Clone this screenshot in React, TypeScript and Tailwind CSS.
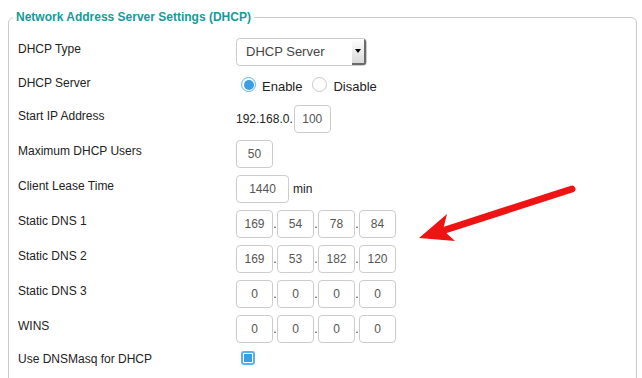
import React from "react";

const Box = ({ v, w = "w-[37px]" }: { v: string; w?: string }) => (
  <div className={`${w} h-[28px] border border-[#cccccc] rounded-[4px] text-center leading-[26px] text-[12px] text-[#555555]`}>{v}</div>
);

const Dot = () => <span className="w-[4px] text-center text-[12px] text-[#333]">.</span>;

const Ip = ({ parts }: { parts: string[] }) => (
  <div className="flex items-baseline">
    <Box v={parts[0]} />
    <Dot />
    <Box v={parts[1]} />
    <Dot />
    <Box v={parts[2]} />
    <Dot />
    <Box v={parts[3]} />
  </div>
);

const Row = ({ label, h, children, lp = "pb-[5px]" }: { label: string; h: string; children: React.ReactNode; lp?: string }) => (
  <div className={`flex items-center ${h}`}>
    <div className={`w-[218px] text-[12px] text-[#222] ${lp}`}>{label}</div>
    <div className="flex items-center">{children}</div>
  </div>
);

export default function App() {
  return (
    <div className="relative w-[642px] h-[378px] overflow-hidden bg-white" style={{ fontFamily: '"Liberation Sans", Arial, sans-serif' }}>
      <fieldset className="ml-[8px] mr-[5px] mt-[10px] border border-[#cccccc] rounded-[6px] pl-[9px] pr-2 pb-4 h-[420px]">
        <legend className="-ml-[5px] px-[3px] text-[12px] font-bold text-[#159a9a] leading-[15px]">Network Address Server Settings (DHCP)</legend>
        <div className="pt-[10px]">
          <Row label="DHCP Type" h="h-[33px]">
            <div className="flex w-[131px] h-[28px] border border-[#cccccc] rounded-[4px] overflow-hidden">
              <div className="flex-1 pl-[9px] text-[13px] leading-[26px] text-[#444]">DHCP Server</div>
              <div className="w-[14px] flex items-center justify-center bg-gradient-to-b from-[#ffffff] to-[#d9d9d9] border-r-2 border-b-2 border-[#6a6a6a]">
                <div className="w-0 h-0 border-l-[3px] border-r-[3px] border-t-[4px] border-l-transparent border-r-transparent border-t-black" />
              </div>
            </div>
          </Row>
          <Row label="DHCP Server" h="h-[33px]" lp="pb-[3px]">
            <div className="flex items-center pl-[5px]">
              <div className="w-[15px] h-[15px] rounded-full border border-[#5ab2ea] bg-white flex items-center justify-center">
                <div className="w-[10px] h-[10px] rounded-full bg-[#3b9fe5]" />
              </div>
              <span className="ml-[6px] mt-[5px] text-[13px] text-[#222]">Enable</span>
              <div className="ml-[10px] w-[15px] h-[15px] rounded-full border border-[#c8c8c8] bg-white" />
              <span className="ml-[6px] mt-[5px] text-[13px] text-[#222]">Disable</span>
            </div>
          </Row>
          <Row label="Start IP Address" h="h-[35px]">
            <div className="flex items-baseline">
              <span className="text-[12px] text-[#222]">192.168.0.</span>
              <div className="ml-[1px]"><Box v="100" /></div>
            </div>
          </Row>
          <Row label="Maximum DHCP Users" h="h-[35px]">
            <Box v="50" />
          </Row>
          <Row label="Client Lease Time" h="h-[35px]">
            <div className="flex items-baseline">
              <Box v="1440" w="w-[53px]" />
              <span className="ml-[4px] text-[12px] text-[#222]">min</span>
            </div>
          </Row>
          <Row label="Static DNS 1" h="h-[35px]">
            <Ip parts={["169", "54", "78", "84"]} />
          </Row>
          <Row label="Static DNS 2" h="h-[35px]">
            <Ip parts={["169", "53", "182", "120"]} />
          </Row>
          <Row label="Static DNS 3" h="h-[35px]">
            <Ip parts={["0", "0", "0", "0"]} />
          </Row>
          <Row label="WINS" h="h-[35px]">
            <Ip parts={["0", "0", "0", "0"]} />
          </Row>
          <Row label="Use DNSMasq for DHCP" h="h-[24px]" lp="pt-[2px]">
            <div className="ml-[5px] w-[14px] h-[14px] rounded-[3px] border-2 border-[#5ab2ea] bg-white flex items-center justify-center">
              <div className="w-[8px] h-[8px] bg-[#3b9fe5]" />
            </div>
          </Row>
        </div>
      </fieldset>
      <svg className="absolute left-0 top-0 pointer-events-none" width="642" height="378" viewBox="0 0 642 378">
        <line x1="572" y1="189" x2="445" y2="230" stroke="#ee1414" strokeWidth="7" strokeLinecap="round" />
        <polygon points="419,238 447,214 443,230 455,241" fill="#ee1414" />
      </svg>
    </div>
  );
}
